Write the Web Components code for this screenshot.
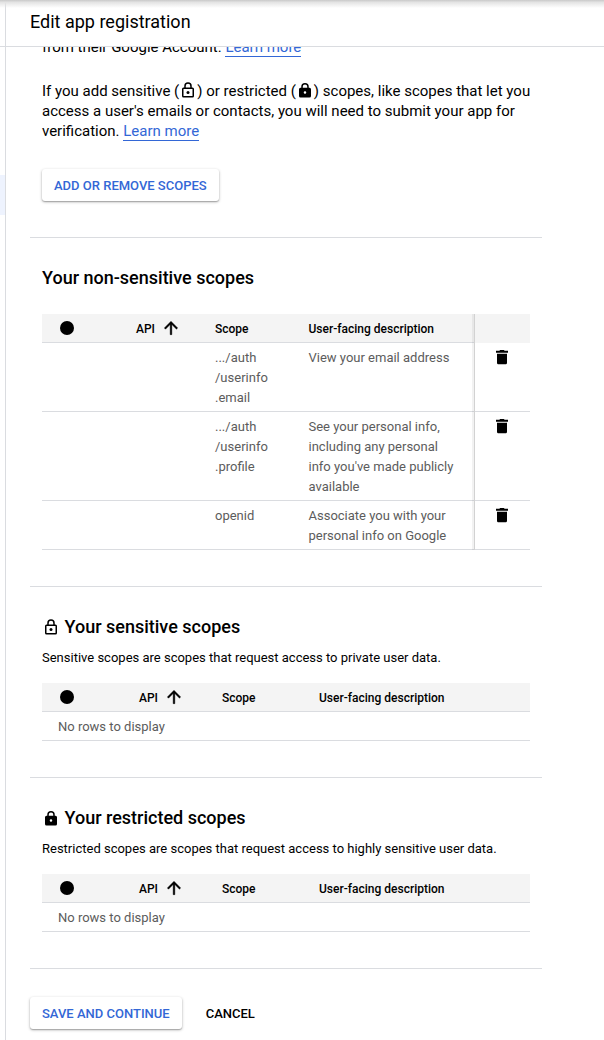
<!DOCTYPE html>
<html lang="en">
<head>
<meta charset="utf-8">
<title>Edit app registration</title>
<style>
html, body { margin: 0; height: 1040px; overflow: hidden; background: #fff; font-family: Roboto, "Liberation Sans", sans-serif; color: #000; }
</style>
</head>
<body>
<registration-page></registration-page>
<script>
const define = (name, html, setup) => {
  const template = document.createElement('template');
  template.innerHTML = html;
  customElements.define(name, class extends HTMLElement {
    connectedCallback() {
      if (this.shadowRoot) return;
      this.attachShadow({ mode: 'open' }).append(template.content.cloneNode(true));
      if (setup) setup(this);
    }
  });
};

const ICONS = {
  lock: '<path d="M12 1.5a5 5 0 0 0-5 5V8.500H6a2 2 0 0 0-2 2v9.500a2 2 0 0 0 2 2h12a2 2 0 0 0 2-2v-9.500a2 2 0 0 0-2-2h-1V6.500a5 5 0 0 0-5-5zM9 6.500a3 3 0 0 1 6 0V8.500H9zM6 10.500h12v9.500H6z" fill-rule="evenodd"/><circle cx="12" cy="15.300" r="2"/>',
  locked: '<path fill-rule="evenodd" d="M18 9h-1V7.500A5 5 0 0 0 7 7.500V9H6a2 2 0 0 0-2 2v9a2 2 0 0 0 2 2h12a2 2 0 0 0 2-2V11a2 2 0 0 0-2-2zm-6 8a1.700 1.700 0 1 1 0-3.400 1.700 1.700 0 0 1 0 3.400zM9 9V7.500a3 3 0 0 1 6 0V9z"/>',
  up: '<path d="M4 12l1.410 1.410L11 7.830V20h2V7.830l5.580 5.590L20 12l-8-8z" stroke="#000" stroke-width=".5"/>',
  trash: '<path d="M6 18.800c0 1.100.9 2 2 2h8c1.100 0 2-.9 2-2V8.200H6zM19.200 4.600h-4l-1-1h-4.400l-1 1h-4V7h14.400z"/>',
  dot: '<circle cx="12" cy="12" r="12"/>'
};

define('ui-icon', `
<style>
:host { display: inline-block; width: var(--size, 18px); height: var(--size, 18px); flex: none; }
svg { display: block; width: 100%; height: 100%; }
</style><svg viewBox="0 0 24 24"></svg>`,
  el => el.shadowRoot.querySelector('svg').innerHTML = ICONS[el.getAttribute('name')]);

define('ui-link', `
<style>
:host { display: inline; color: #3367d6; border-bottom: 1px solid #3367d6; }
</style><slot></slot>`);

define('ui-button', `
<style>
:host { display: inline-flex; align-items: center; justify-content: center; box-sizing: border-box; height: 32px; padding: 1px 12px 0; border-radius: 3px; font-size: 13px; font-weight: 500; white-space: nowrap; }
:host([raised]) { color: #3367d6; background: #fff; box-shadow: 0 1px 3px rgba(0,0,0,.3), 0 1px 1px rgba(0,0,0,.18); }
</style><slot></slot>`);

define('scope-section', `
<style>
:host { display: block; box-sizing: border-box; width: 512px; padding: 28px 12px 36px; border-bottom: 1px solid #dadce0; }
h2 { display: flex; align-items: center; margin: 0; height: 24px; font-size: 18px; font-weight: 500; }
h2 ui-icon { margin-right: 4.500px; }
p { margin: 9px 0 15px; font-size: 13px; line-height: 20px; white-space: nowrap; }
:host([plain]) h2 { margin-bottom: 24px; }
span { margin-top: -1px; }
</style>
<h2></h2><slot></slot>`,
  el => {
    const h = el.shadowRoot.querySelector('h2');
    if (el.hasAttribute('icon')) h.innerHTML = '<ui-icon name="' + el.getAttribute('icon') + '"></ui-icon>';
    const span = document.createElement('span');
    span.textContent = el.getAttribute('heading');
    h.append(span);
    if (el.hasAttribute('note')) {
      const p = document.createElement('p');
      p.textContent = el.getAttribute('note');
      h.after(p);
    }
  });

define('scope-header', `
<style>
:host { display: grid; grid-template-columns: var(--columns); box-sizing: border-box; height: 29px; background: #f4f4f4; border-bottom: 1px solid #dadce0; font-size: 12px; font-weight: 500; line-height: 30px; white-space: nowrap; }
.dot { --size: 14px; margin: 7px 0 0 18px; }
.api { display: flex; }
.api ui-icon { --size: 20px; margin: 4px 0 0 5.500px; }
.edge { border-left: 1px solid #d2d2d2; box-shadow: -2px 0 0 rgba(0,0,0,.05); height: 29px; background: #f4f4f4; }
:host(:not([actions])) .edge { display: none; }
</style>
<ui-icon class="dot" name="dot"></ui-icon>
<span class="api">API<ui-icon name="up"></ui-icon></span>
<span>Scope</span><span>User-facing description</span><span class="edge"></span>`);

define('scope-row', `
<style>
:host { display: grid; grid-template-columns: var(--columns); border-bottom: 1px solid #dadce0; font-size: 13px; line-height: 20px; color: #5c5c5c; }
.scope { grid-column: 3; padding: 5px 0 3px; }
.description { padding: 5px 0 3px; }
.edge { color: #000; border-left: 1px solid #d2d2d2; box-shadow: -2px 0 0 rgba(0,0,0,.05); margin-bottom: -1px; }
.edge ui-icon { --size: 20px; margin: 4px 0 0 17px; }
</style>
<span class="scope"><slot name="scope"></slot></span>
<span class="description"><slot></slot></span>
<span class="edge"><ui-icon name="trash"></ui-icon></span>`);

define('empty-row', `
<style>
:host { display: block; padding: 5px 16px 3px; border-bottom: 1px solid #dadce0; font-size: 13px; line-height: 20px; color: #5c5c5c; }
</style><slot></slot>`);

define('registration-page', `
<style>
:host { display: grid; grid-template: 46px 993px / 5px 598px; gap: 1px; height: 1040px; width: 604px; overflow: hidden; background: #dadce0; position: relative; }
:host::before { content: ""; position: absolute; inset: 0 0 auto; height: 8px; background: linear-gradient(#c9c9c9, #e4e4e4 30%, rgba(255,255,255,0)); }
.rail-top, .rail, header, main { background: #fff; }
.rail { padding-top: 128px; }
.rail i { display: block; height: 40px; background: #eef3fe; }
header { padding-left: 24px; font-size: 18px; line-height: 44px; }
main { padding-left: 24px; overflow: hidden; }
.intro { box-sizing: border-box; width: 512px; height: 201px; padding: 0 0 0 12px; border-bottom: 1px solid #dadce0; font-size: 15px; line-height: 20px; white-space: nowrap; }
.intro p { margin: 0; }
.intro p:first-child { margin-top: -10px; }
.intro p + p { margin-top: 24px; }
.intro ui-icon { vertical-align: -3px; }
.intro ui-button { margin-top: 28px; }
.first { --columns: 94px 79px 93.500px 165.500px 56px; }
.other { --columns: 97px 83px 97px 211px; }
footer { display: flex; padding-top: 28px; }
footer ui-button + ui-button { margin-left: 12px; }
</style>
<div class="rail-top"></div>
<header>Edit app registration</header>
<div class="rail"><i></i></div>
<main>
  <div class="intro">
    <p>from their Google Account. <ui-link>Learn more</ui-link></p>
    <p>If you add sensitive (<ui-icon name="lock"></ui-icon>) or restricted (<ui-icon name="locked"></ui-icon>) scopes, like scopes that let you<br>access a user's emails or contacts, you will need to submit your app for<br>verification. <ui-link>Learn more</ui-link></p>
    <ui-button raised>ADD OR REMOVE SCOPES</ui-button>
  </div>
  <scope-section plain heading="Your non-sensitive scopes" class="first">
    <scope-header actions></scope-header>
    <scope-row><span slot="scope">.../auth<br>/userinfo<br>.email</span>View your email address</scope-row>
    <scope-row><span slot="scope">.../auth<br>/userinfo<br>.profile</span>See your personal info,<br>including any personal<br>info you've made publicly<br>available</scope-row>
    <scope-row><span slot="scope">openid</span>Associate you with your<br>personal info on Google</scope-row>
  </scope-section>
  <scope-section class="other" icon="lock" heading="Your sensitive scopes" note="Sensitive scopes are scopes that request access to private user data.">
    <scope-header></scope-header>
    <empty-row>No rows to display</empty-row>
  </scope-section>
  <scope-section class="other" icon="locked" heading="Your restricted scopes" note="Restricted scopes are scopes that request access to highly sensitive user data.">
    <scope-header></scope-header>
    <empty-row>No rows to display</empty-row>
  </scope-section>
  <footer><ui-button raised>SAVE AND CONTINUE</ui-button><ui-button>CANCEL</ui-button></footer>
</main>`);
</script>
</body>
</html>
